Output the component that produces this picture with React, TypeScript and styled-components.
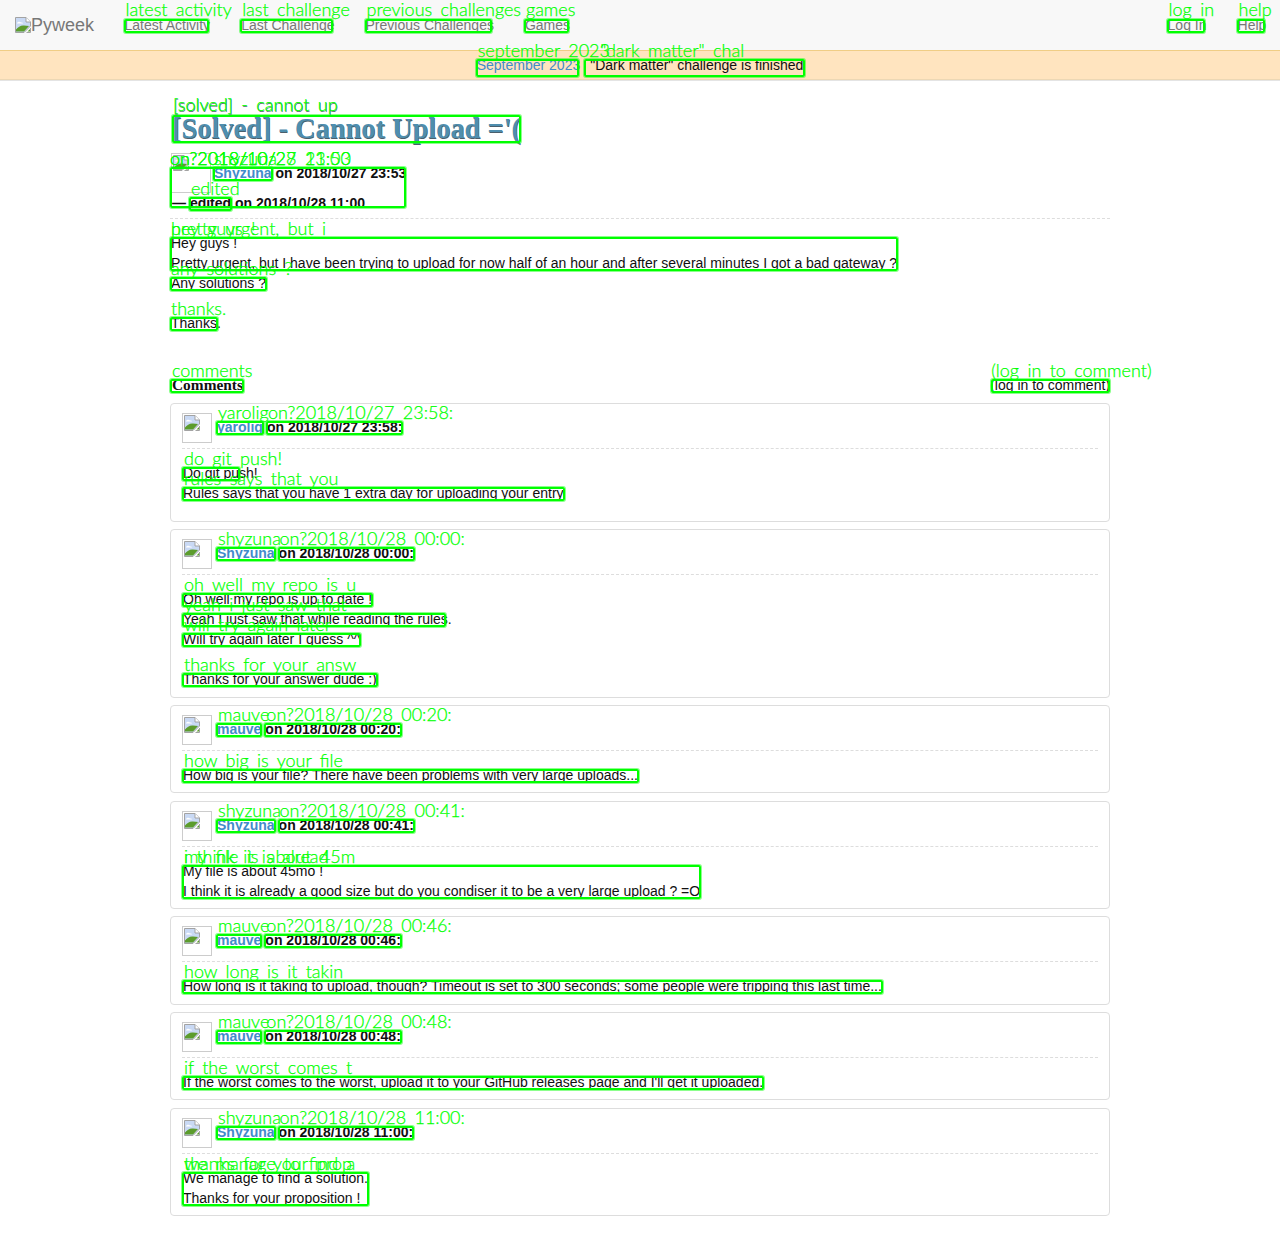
import React from 'react';
import styled, { createGlobalStyle } from 'styled-components';

const Global = createGlobalStyle`
  html, body { margin: 0; padding: 0; background: #fff; }
  body {
    font-family: "Liberation Sans", Arial, sans-serif;
    font-size: 14px;
    line-height: 20px;
    color: #111;
  }
`;

const MarkWrap = styled.span<{ $block?: boolean }>`
  position: relative;
  display: ${p => (p.$block ? 'block' : 'inline-block')};
`;

const MarkBox = styled.span<{ $top: number; $bottom: number; $left: number; $right: number; $width?: number }>`
  position: absolute;
  top: ${p => p.$top}px;
  bottom: ${p => p.$bottom}px;
  left: ${p => p.$left}px;
  ${p => (p.$width ? `width: ${p.$width}px;` : `right: ${p.$right}px;`)}
  border: 2px solid #00ff00;
  border-radius: 2px;
  box-sizing: border-box;
  box-shadow: 0 0 0 1px rgba(0, 255, 0, 0.45);
  pointer-events: none;
`;

const MarkLabel = styled.span<{ $dx: number; $dy: number }>`
  position: absolute;
  left: ${p => p.$dx}px;
  top: ${p => p.$dy}px;
  font-family: Lato, "Open Sans", sans-serif;
  font-weight: 300;
  font-size: 18px;
  line-height: 18px;
  letter-spacing: 0;
  word-spacing: 3.5px;
  color: #00ff00;
  -webkit-text-stroke: 0.25px #00ff00;
  white-space: nowrap;
  pointer-events: none;
`;

type MarkProps = {
  labels: string[];
  children: React.ReactNode;
  block?: boolean;
  top?: number;
  bottom?: number;
  left?: number;
  right?: number;
  width?: number;
  dx?: number;
  dy?: number;
};

function Mark({ labels, children, block, top = 4, bottom = 2, left = -1, right = -1, width, dx = 1, dy = -14 }: MarkProps) {
  return (
    <MarkWrap $block={block}>
      {children}
      <MarkBox $top={top} $bottom={bottom} $left={left} $right={right} $width={width} />
      {labels.map(l => (
        <MarkLabel key={l} $dx={dx} $dy={dy}>
          {l}
        </MarkLabel>
      ))}
    </MarkWrap>
  );
}

function NavMark({ label, children }: { label: string; children: React.ReactNode }) {
  return (
    <Mark labels={[label]} right={1.5} dy={-15}>
      {children}
    </Mark>
  );
}

const BrokenSvg = styled.svg`
  display: block;
  flex: none;
  width: 16px;
  height: 16px;
`;

function BrokenImage() {
  return (
    <BrokenSvg viewBox="0 0 16 16">
      <path d="M0.5 0.5H11L15.5 5V9L9 15.5H0.5Z" fill="#c9d9f4" stroke="#a3a3a3" />
      <path d="M11 0.5V5H15.5" fill="#fff" stroke="#a3a3a3" />
      <path d="M2 6c1-1.500 3-1.500 4-.5 1-.3 2 .2 2 1H2Z" fill="#fff" />
      <path d="M1 14.500V12.500C3 10 6 8 9 8.500L14 9 9 14.500Z" fill="#5c9c2c" />
      <path d="M15.500 11V15.500H11.500" fill="#fff" stroke="#a3a3a3" />
      <path d="M12.500 14.500L15 12V14.500Z" fill="#5c9c2c" />
    </BrokenSvg>
  );
}

const Navbar = styled.nav`
  display: flex;
  align-items: center;
  gap: 31px;
  box-sizing: border-box;
  height: 50px;
  padding: 0 13.7px 0 15px;
  background: #f8f8f8;
  color: #777;
`;

const Brand = styled.span`
  display: flex;
  align-items: center;
  margin-right: -0.5px;
  font-size: 18px;
`;

const NavSpacer = styled.span`
  flex: 1;
`;

const Banner = styled.div`
  display: flex;
  justify-content: center;
  gap: 10px;
  box-sizing: border-box;
  height: 30px;
  padding-top: 4px;
  background: #ffe4bf;
  border-top: 1px solid #f0cd85;
  border-bottom: 1px solid #ecd7b4;
  box-shadow: 0 1px 0 #e4e4e4;
`;

const Link = styled.span`
  color: #428bca;
`;

const Main = styled.main`
  width: 940px;
  margin: 0 auto;
`;

const Title = styled.h1`
  margin: 33px 0 0 2px;
  font-family: "Liberation Serif", serif;
  font-weight: 700;
  font-size: 28.4px;
  line-height: 32px;
  color: #4f8eae;
  text-shadow: 0.5px 0.5px 0 #4a5f6c;
`;

const PostHead = styled.div`
  box-sizing: border-box;
  height: 56px;
  margin-top: 18px;
  border-bottom: 1px dashed #ddd;
  font-weight: 700;
`;

const MetaBlock = styled.div`
  position: relative;
  display: inline-block;
  width: 236px;
  white-space: nowrap;
`;

const PostAvatar = styled.span`
  float: left;
  box-sizing: border-box;
  width: 40px;
  height: 40px;
  margin: -10px 3px 0 1px;
  padding: 1px;
  border: 1px solid #ccc;
`;

const MetaEdited = styled.div`
  clear: left;
  margin-top: 10px;
  padding-left: 2px;
`;

const Body = styled.div`
  margin-top: 14px;
  padding-left: 1px;
`;

const Paragraph = styled.p`
  margin: 0;
`;

const CommentsHead = styled.div`
  display: flex;
  justify-content: space-between;
  align-items: baseline;
  margin: 42px 0 8px;
  padding-left: 2px;
`;

const CommentsTitle = styled.span`
  font-family: "Liberation Serif", serif;
  font-weight: 700;
  font-size: 15.4px;
`;

const Cards = styled.div`
  display: flex;
  flex-direction: column;
  gap: 7.2px;
`;

const Card = styled.article<{ $extra?: boolean }>`
  box-sizing: border-box;
  padding: 9px 11px ${p => (p.$extra ? '18px' : '7.5px')};
  border: 1px solid #ddd;
  border-radius: 4px;
`;

const CardHead = styled.header`
  display: flex;
  align-items: flex-start;
  gap: 5px;
  box-sizing: border-box;
  height: 36px;
  border-bottom: 1px dashed #ddd;
  font-weight: 700;
`;

const CommentAvatar = styled.span`
  flex: none;
  box-sizing: border-box;
  width: 30px;
  height: 30px;
  padding: 1px;
  border: 1px solid #ccc;
`;

const CardMeta = styled.span`
  display: flex;
  gap: 4px;
  margin-top: 4px;
`;

const CardBody = styled.div`
  margin-top: 14px;
  padding-left: 1px;
`;

type Group = { lines: string[]; labels: string[]; width?: number; gapBefore?: boolean };
type Comment = { name: string; date: string; extra?: boolean; groups: Group[] };

const comments: Comment[] = [
  {
    name: 'yarolig',
    date: '2018/10/27 23:58',
    extra: true,
    groups: [
      { lines: ['Do git push!'], labels: ['do git push!'], width: 58 },
      { lines: ['Rules says that you have 1 extra day for uploading your entry'], labels: ['rules says that you'] },
    ],
  },
  {
    name: 'Shyzuna',
    date: '2018/10/28 00:00',
    groups: [
      { lines: ['Oh well my repo is up to date !'], labels: ['oh well my repo is u'] },
      { lines: ['Yeah I just saw that while reading the rules.'], labels: ['yeah i just saw that'], width: 264 },
      { lines: ['Will try again later I guess ^^'], labels: ['will try again later'] },
      { lines: ['Thanks for your answer dude :)'], labels: ['thanks for your answ'], gapBefore: true },
    ],
  },
  {
    name: 'mauve',
    date: '2018/10/28 00:20',
    groups: [
      { lines: ['How big is your file? There have been problems with very large uploads...'], labels: ['how big is your file'] },
    ],
  },
  {
    name: 'Shyzuna',
    date: '2018/10/28 00:41',
    groups: [
      {
        lines: ['My file is about 45mo !', 'I think it is already a good size but do you condiser it to be a very large upload ? =O'],
        labels: ['my file is about 45m', 'i think it is alread'],
      },
    ],
  },
  {
    name: 'mauve',
    date: '2018/10/28 00:46',
    groups: [
      {
        lines: ['How long is it taking to upload, though? Timeout is set to 300 seconds; some people were tripping this last time...'],
        labels: ['how long is it takin'],
      },
    ],
  },
  {
    name: 'mauve',
    date: '2018/10/28 00:48',
    groups: [
      {
        lines: ["If the worst comes to the worst, upload it to your GitHub releases page and I'll get it uploaded."],
        labels: ['if the worst comes t'],
      },
    ],
  },
  {
    name: 'Shyzuna',
    date: '2018/10/28 11:00',
    groups: [
      {
        lines: ['We manage to find a solution.', 'Thanks for your proposition !'],
        labels: ['we manage to find a', 'thanks for your prop'],
      },
    ],
  },
];

const Gap = styled.div`
  height: 20px;
`;

function TextGroup({ g }: { g: Group }) {
  return (
    <>
      {g.gapBefore && <Gap />}
      <div>
        <Mark labels={g.labels} width={g.width}>
          {g.lines.map(l => (
            <Paragraph key={l}>{l}</Paragraph>
          ))}
        </Mark>
      </div>
    </>
  );
}

export default function App() {
  return (
    <>
      <Global />
      <Navbar>
        <Brand>
          <BrokenImage />
          Pyweek
        </Brand>
        <NavMark label="latest activity">Latest Activity</NavMark>
        <NavMark label="last challenge">Last Challenge</NavMark>
        <NavMark label="previous challenges">Previous Challenges</NavMark>
        <NavMark label="games">Games</NavMark>
        <NavSpacer />
        <NavMark label="log in">Log In</NavMark>
        <NavMark label="help">Help</NavMark>
      </Navbar>
      <Banner>
        <Mark labels={['september 2023']} right={1}>
          <Link>September 2023</Link>
        </Mark>
        <Mark labels={['"dark matter" chal']} left={-6} right={-2} dx={10}>
          "Dark matter" challenge is finished
        </Mark>
      </Banner>
      <Main>
        <Title>
          <Mark labels={['[solved] - cannot up']} top={2} bottom={2} left={0} right={0} dy={-18}>
            [Solved] - Cannot Upload ='(
          </Mark>
        </Title>
        <PostHead>
          <MetaBlock>
            <PostAvatar>
              <BrokenImage />
            </PostAvatar>
            <Mark labels={['shyzuna']} dx={0}>
              <Link>Shyzuna</Link>
            </Mark>{' '}
            on 2018/10/27 23:53
            <MetaEdited>
              —{' '}
              <Mark labels={['edited']}>edited</Mark> on 2018/10/28 11:00
            </MetaEdited>
            <MarkBox $top={4} $bottom={5} $left={0} $right={0} />
            <MarkLabel $dx={0} $dy={-14}>
              on?2018/10/27 23:53
            </MarkLabel>
            <MarkLabel $dx={0} $dy={-14}>
              on?2018/10/28 11:00
            </MarkLabel>
          </MetaBlock>
        </PostHead>
        <Body>
          <Mark labels={['hey guys !', 'pretty urgent, but i']} dx={0}>
            <Paragraph>Hey guys !</Paragraph>
            <Paragraph>Pretty urgent, but I have been trying to upload for now half of an hour and after several minutes I got a bad gateway ?</Paragraph>
          </Mark>
          <div>
            <Mark labels={['any solutions ?']} dx={0}>
              Any solutions ?
            </Mark>
          </div>
          <Gap />
          <div>
            <Mark labels={['thanks.']} width={48} dx={0}>
              Thanks.
            </Mark>
          </div>
        </Body>
        <CommentsHead>
          <Mark labels={['comments']} left={-2} dx={0}>
            <CommentsTitle>Comments</CommentsTitle>
          </Mark>
          <Mark labels={['(log in to comment)']} left={1} right={0}>
            (log in to comment)
          </Mark>
        </CommentsHead>
        <Cards>
          {comments.map(c => (
            <Card key={c.date} $extra={c.extra}>
              <CardHead>
                <CommentAvatar>
                  <BrokenImage />
                </CommentAvatar>
                <CardMeta>
                  <Mark labels={[c.name.toLowerCase()]}>
                    <Link>{c.name}</Link>
                  </Mark>
                  <Mark labels={[`on?${c.date}:`]}>on {c.date}:</Mark>
                </CardMeta>
              </CardHead>
              <CardBody>
                {c.groups.map(g => (
                  <TextGroup key={g.labels[0]} g={g} />
                ))}
              </CardBody>
            </Card>
          ))}
        </Cards>
      </Main>
    </>
  );
}
